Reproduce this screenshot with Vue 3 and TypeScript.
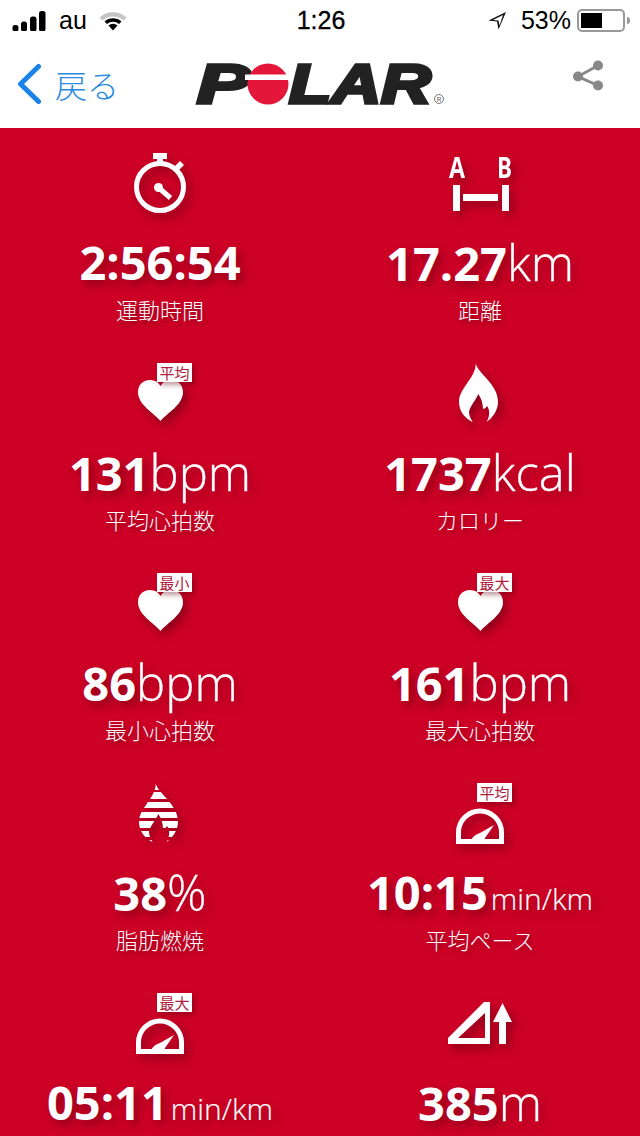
<template>
  <div class="screen">
    <div class="status-bar">
      <div class="status-left">
        <svg class="signal" width="34" height="20" viewBox="0 0 34 20">
          <rect x="0.5" y="14" width="6" height="6.5" rx="2.5" />
          <rect x="9" y="10.5" width="6" height="10" rx="2.5" />
          <rect x="18" y="5.5" width="6.5" height="15" rx="2.5" />
          <rect x="27" y="0" width="6.5" height="20.5" rx="2.5" />
        </svg>
        <span class="carrier">au</span>
        <svg class="wifi" width="28" height="21" viewBox="0 0 28 21">
          <path d="M0.5 7.5 A20 20 0 0 1 27.5 7.5 L24.5 10.5 A15.5 15.5 0 0 0 3.5 10.5 Z" fill="#c4c4c4" />
          <path d="M5.5 11.5 A13 13 0 0 1 22.5 11.5 L20 14 A9.5 9.5 0 0 0 8 14 Z" fill="#000" />
          <path d="M9.5 15.5 A7 7 0 0 1 18.5 15.5 L14 20.5 Z" fill="#000" />
        </svg>
      </div>
      <div class="status-time">1:26</div>
      <div class="status-right">
        <svg class="location" width="20" height="20" viewBox="0 0 20 20">
          <path d="M19 1 L1.5 9.5 L10 10.5 L11.5 18.5 Z M16 4 L6 9 L11.5 9.5 L12.5 14.5 Z" fill="#111" fill-rule="evenodd" />
        </svg>
        <span class="battery-text">53%</span>
        <div class="battery"><div class="battery-level" :style="{ width: batteryLevel + '%' }"></div></div>
        <div class="battery-tip"></div>
      </div>
    </div>

    <div class="nav-bar">
      <div class="back">
        <svg width="26" height="42" viewBox="0 0 26 42">
          <path d="M22.5 3.5 L4.5 21 L22.5 38.5" fill="none" stroke="#1a82e8" stroke-width="5" stroke-linecap="round" stroke-linejoin="round" />
        </svg>
        <span>戻る</span>
      </div>
      <svg class="logo" width="256" height="70" viewBox="-3 0 256 70">
        <g transform="translate(0 13)">
          <text x="2" y="41" class="logo-text" textLength="53" lengthAdjust="spacingAndGlyphs">P</text>
          <circle cx="73" cy="22" r="20.5" fill="#e4173a" />
          <rect x="50" y="12.5" width="46" height="5.5" fill="#fff" />
          <text x="94" y="41" class="logo-text" textLength="142" lengthAdjust="spacingAndGlyphs">LAR</text>
          <circle cx="244" cy="37" r="4.5" fill="none" stroke="#555" stroke-width="0.8" />
          <text x="244" y="39.5" class="logo-mark" text-anchor="middle">R</text>
        </g>
      </svg>
      <svg class="share" width="36" height="36" viewBox="0 0 36 36">
        <path d="M25 6.5 L5 17.5 L25 26.5" fill="none" stroke="#888" stroke-width="3" />
        <circle cx="25" cy="6.5" r="5" fill="#888" />
        <circle cx="5" cy="17.5" r="5" fill="#888" />
        <circle cx="25" cy="26.5" r="5" fill="#888" />
      </svg>
    </div>

    <div class="stats">
      <div v-for="stat in stats" :key="stat.value" class="stat">
        <div class="icon-box">
          <svg class="icon" width="80" height="80" viewBox="0 0 80 80">
            <template v-if="stat.icon === 'watch'">
              <rect x="33" y="7" width="14" height="6" fill="#fff" />
              <rect x="37" y="12" width="6" height="6" fill="#fff" />
              <path d="M55 20 L60 15 L64 19 L59 24 Z" fill="#fff" />
              <circle cx="40" cy="41" r="23.5" fill="none" stroke="#fff" stroke-width="5" />
              <circle cx="38.5" cy="41.5" r="4.5" fill="#fff" />
              <path d="M39 42 L50.5 52" stroke="#fff" stroke-width="5" />
            </template>
            <template v-else-if="stat.icon === 'distance'">
              <text x="9" y="32" class="ab" textLength="16" lengthAdjust="spacingAndGlyphs">A</text>
              <text x="57" y="32" class="ab" textLength="15" lengthAdjust="spacingAndGlyphs">B</text>
              <rect x="13" y="39" width="7" height="26" fill="#fff" />
              <rect x="62" y="39" width="7" height="26" fill="#fff" />
              <rect x="23" y="48" width="35" height="7" fill="#fff" />
            </template>
            <template v-else-if="stat.icon === 'heart'">
              <path d="M40.5 65 C34 57 18 49 18 36 C18 28 24 24 30 24 C35 24 38.5 26 40.5 30 C42.5 26 46 24 51 24 C57 24 63 28 63 36 C63 49 47 57 40.5 65 Z" fill="#fff" />
            </template>
            <template v-else-if="stat.icon === 'flame'">
              <path :d="flamePath" fill="#fff" />
            </template>
            <template v-else-if="stat.icon === 'fat'">
              <clipPath id="fat-clip"><path :d="flamePath" /></clipPath>
              <g clip-path="url(#fat-clip)" fill="#fff">
                <rect v-for="band in fatBands" :key="band[0]" x="15" :y="band[0]" width="50" :height="band[1]" />
              </g>
            </template>
            <template v-else-if="stat.icon === 'gauge'">
              <path d="M18.5 65.5 V56.5 A21.5 21.5 0 0 1 61.5 56.5 V65.5 Z" fill="none" stroke="#fff" stroke-width="5" stroke-linejoin="miter" />
              <path d="M30 66 C32 61 36 58 40 57 L54 49 L45 62 C44 64 44 65 44 66 Z" fill="#fff" />
            </template>
            <template v-else>
              <path d="M44 16 H50 V58 H8 V52 Z M45 27 L18 52 H45 Z" fill="#fff" fill-rule="evenodd" />
              <path d="M62.5 17 L72 36 H66 V58 H59 V36 H53 Z" fill="#fff" />
            </template>
          </svg>
          <div v-if="stat.badge" class="badge">{{ stat.badge }}</div>
        </div>
        <div class="value">
          <b>{{ stat.value }}</b><span v-if="stat.unit" :class="stat.small ? 'unit-small' : 'unit'">{{ stat.unit }}</span>
        </div>
        <div v-if="stat.label" class="label">{{ stat.label }}</div>
      </div>
    </div>
  </div>
</template>

<script setup lang="ts">
interface Stat {
  icon: string;
  value: string;
  unit?: string;
  small?: boolean;
  label?: string;
  badge?: string;
}

const batteryLevel = 53;

const flamePath =
  "M35.7 7.3 C38 18 58 28 58 46 C58 55 52 62 46.7 66 C50 60 50 54 47 50 C46 52 44 53 43 53 C43 47 41 42 38.3 38 C36 44 30 50 29 56 C29 60 31 63 32.7 66 C26 63 19 56 19 46 C19 32 36 22 35.7 7.3 Z";

const fatBands = [
  [7, 7],
  [16, 7],
  [26, 6],
  [36, 6],
  [45, 7],
  [55, 6],
  [64, 3],
];

// the last row's labels are below the fold
const stats: Stat[] = [
  { icon: "watch", value: "2:56:54", label: "運動時間" },
  { icon: "distance", value: "17.27", unit: "km", label: "距離" },
  { icon: "heart", badge: "平均", value: "131", unit: "bpm", label: "平均心拍数" },
  { icon: "flame", value: "1737", unit: "kcal", label: "カロリー" },
  { icon: "heart", badge: "最小", value: "86", unit: "bpm", label: "最小心拍数" },
  { icon: "heart", badge: "最大", value: "161", unit: "bpm", label: "最大心拍数" },
  { icon: "fat", value: "38", unit: "%", label: "脂肪燃焼" },
  { icon: "gauge", badge: "平均", value: "10:15", unit: "min/km", small: true, label: "平均ペース" },
  { icon: "gauge", badge: "最大", value: "05:11", unit: "min/km", small: true },
  { icon: "climb", value: "385", unit: "m" },
];
</script>

<style scoped>
.screen {
  width: 640px;
  height: 1136px;
  overflow: hidden;
  background: #cd0026;
  font-family: "Open Sans", "Noto Sans CJK JP", sans-serif;
}

.status-bar {
  height: 40px;
  box-sizing: border-box;
  background: #fff;
  display: grid;
  grid-template-columns: 1fr auto 1fr;
  align-items: center;
  padding: 1px 10px 0 12px;
  color: #000;
  font-family: "Liberation Sans", sans-serif;
  font-size: 25px;
}

.status-left,
.status-right {
  display: flex;
  align-items: center;
}

.status-right {
  justify-content: flex-end;
}

.signal {
  fill: #000;
}

.carrier {
  margin-left: 13px;
}

.wifi {
  margin-left: 12px;
}

.status-time {
  font-weight: 500;
  -webkit-text-stroke: 0.3px #000;
}

.battery-text {
  margin-left: 14px;
  margin-right: 6px;
}

.battery {
  width: 48px;
  height: 23px;
  box-sizing: border-box;
  border: 2px solid #999;
  border-radius: 5px;
  padding: 2px;
}

.battery-level {
  height: 100%;
  background: #000;
}

.battery-tip {
  width: 3px;
  height: 7px;
  margin-left: 2px;
  background: #999;
  border-radius: 0 3px 3px 0;
}

.nav-bar {
  height: 88px;
  background: #fff;
  display: grid;
  grid-template-columns: 1fr auto 1fr;
  align-items: center;
}

.back {
  display: flex;
  align-items: center;
  padding-left: 16px;
  font-family: "Noto Sans CJK JP", sans-serif;
  font-size: 32px;
  font-weight: 300;
  color: #2a8ae0;
}

.back span {
  margin-left: 13px;
  white-space: nowrap;
}

.logo {
  display: block;
  margin-top: -1px;
}

.logo-text {
  font-family: "Liberation Sans", sans-serif;
  font-size: 56px;
  font-weight: 700;
  font-style: italic;
  fill: #222;
  stroke: #222;
  stroke-width: 3.5px;
}

.logo-mark {
  font-family: "Liberation Sans", sans-serif;
  font-size: 6.5px;
  fill: #555;
}

.share {
  justify-self: end;
  margin-right: 31px;
  margin-top: -14px;
}

.stats {
  display: grid;
  grid-template-columns: 320px 320px;
  grid-auto-rows: 210px;
  color: #fff;
}

.stat {
  display: flex;
  flex-direction: column;
  align-items: center;
  padding-top: 18px;
}

.icon-box {
  position: relative;
  width: 80px;
  height: 80px;
}

.icon {
  display: block;
  filter: drop-shadow(4px 5px 5px rgba(90, 0, 15, 0.55));
}

.ab {
  font-family: "Open Sans", sans-serif;
  font-size: 28px;
  font-weight: 700;
  fill: #fff;
}

.badge {
  position: absolute;
  left: 37px;
  top: 7px;
  width: 35px;
  height: 19px;
  background: #fff;
  color: #b01c3c;
  font-size: 15px;
  line-height: 19px;
  text-align: center;
  font-family: "Noto Sans CJK JP", sans-serif;
  box-shadow: 3px 3px 5px rgba(90, 0, 15, 0.4);
}

.value {
  height: 54px;
  margin-top: 9px;
  line-height: 54px;
  font-size: 47px;
  white-space: nowrap;
  text-shadow: 4px 5px 8px rgba(90, 0, 15, 0.5);
}

.value b {
  font-weight: 700;
}

.unit {
  font-weight: 300;
  font-size: 49px;
  -webkit-text-stroke: 0.3px #fff;
}

.unit-small {
  font-weight: 300;
  font-size: 30px;
  margin-left: 3px;
  -webkit-text-stroke: 0.2px #fff;
}

.label {
  margin-top: 5px;
  font-size: 22px;
  line-height: 30px;
  font-weight: 300;
  font-family: "Noto Sans CJK JP", sans-serif;
  text-shadow: 2px 3px 4px rgba(90, 0, 15, 0.5);
}
</style>

<style>
html,
body {
  margin: 0;
  overflow: hidden;
}
</style>
